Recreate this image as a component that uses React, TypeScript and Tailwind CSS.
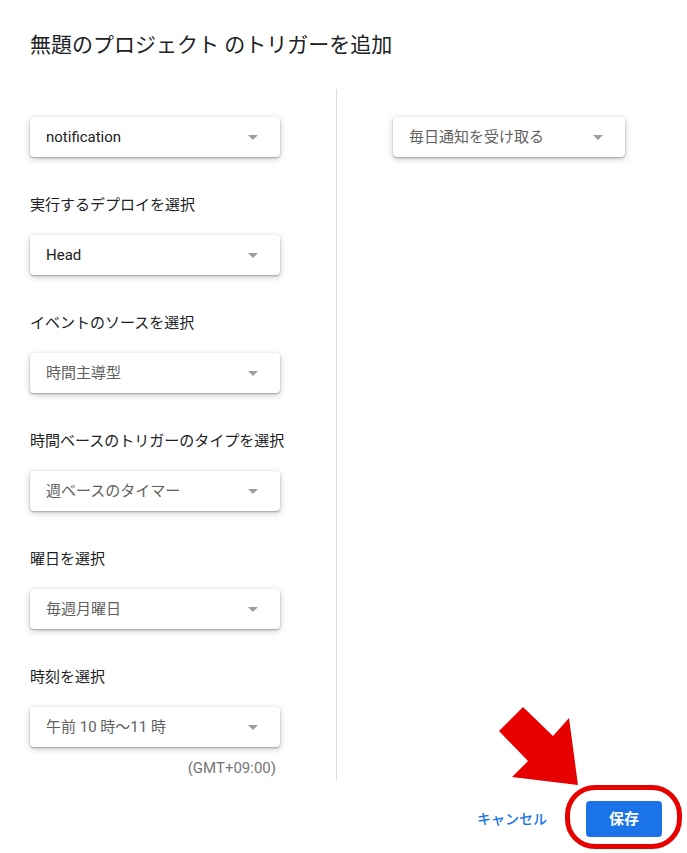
import React from 'react';

const font = { fontFamily: '"Roboto", "Noto Sans CJK JP", sans-serif' };

type SelectProps = { value: string; muted?: boolean; width?: string };

function Select({ value, muted, width = 'w-[250px]' }: SelectProps) {
  return (
    <div
      className={`${width} h-[40px] flex items-center justify-between pl-4 pr-[22px] bg-white rounded-[4px] shadow-[0_1px_2px_rgba(0,0,0,0.3),0_2px_6px_1px_rgba(0,0,0,0.15)]`}
    >
      <span className={`text-[15px] ${muted ? 'text-[#616161]' : 'text-[#202124]'}`}>{value}</span>
      <svg width="10" height="5" viewBox="0 0 10 5">
        <path d="M0 0 L10 0 L5 5 Z" fill="#9e9e9e" />
      </svg>
    </div>
  );
}

function Field({ label, value, muted }: { label: string; value: string; muted?: boolean }) {
  return (
    <div className="mt-[38px]">
      <div className="text-[15px] leading-[20px] text-[#202124] mb-5 whitespace-nowrap">{label}</div>
      <Select value={value} muted={muted} />
    </div>
  );
}

export default function App() {
  return (
    <div className="relative w-[687px] h-[853px] bg-white overflow-hidden" style={font}>
      <h1 className="pl-[30px] pt-[31px] text-[21px] leading-[28px] text-[#202124]">
        無題のプロジェクト のトリガーを追加
      </h1>

      <div className="flex mt-[30px] pl-[30px]">
        <div className="w-[250px] pt-[28px]">
          <Select value="notification" />
          <Field label="実行するデプロイを選択" value="Head" />
          <Field label="イベントのソースを選択" value="時間主導型" muted />
          <Field label="時間ベースのトリガーのタイプを選択" value="週ベースのタイマー" muted />
          <Field label="曜日を選択" value="毎週月曜日" muted />
          <Field label="時刻を選択" value="午前 10 時〜11 時" muted />
          <div className="mt-[11px] pr-1 text-right text-[15px] leading-[20px] text-[#757575]">(GMT+09:00)</div>
          <div className="h-[2px]" />
        </div>
        <div className="ml-[56px] w-px bg-[#dadce0]" />
        <div className="ml-[56px] pt-[28px]">
          <Select value="毎日通知を受け取る" muted width="w-[232px]" />
        </div>
      </div>

      <div className="flex justify-end items-center gap-[39px] pr-[25px] mt-[21px]">
        <span className="text-[14px] font-medium text-[#1a73e8]">キャンセル</span>
        <button className="w-[76px] h-[36px] rounded-[4px] bg-[#1a73e8] text-white text-[15px] font-bold">
          保存
        </button>
      </div>

      {/* annotation overlay */}
      <svg className="absolute left-0 top-0 pointer-events-none" width="687" height="853">
        <polygon
          points="499,731 523,707 553,736 569,718 578,785 512,777 528,761"
          fill="#e60000"
        />
      </svg>
      <div className="absolute left-[565px] top-[785px] w-[117px] h-[64px] border-[5px] border-[#e60000] rounded-[30px] pointer-events-none" />
    </div>
  );
}
